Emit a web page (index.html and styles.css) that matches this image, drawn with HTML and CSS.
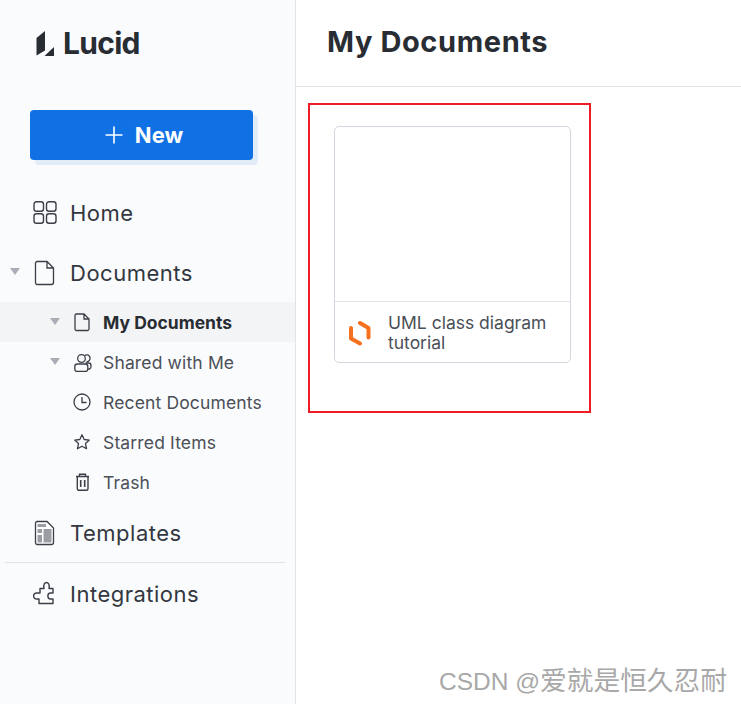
FILE: index.html
```html
<!DOCTYPE html>
<html lang="en">
<head>
<meta charset="utf-8">
<title>My Documents</title>
<link rel="stylesheet" href="styles.css">
</head>
<body>
<div class="app">
  <aside class="sidebar">
    <div class="logo">
      <svg class="logo-mark" width="18" height="25" viewBox="0 0 18 25"><path d="M0.500 7 9 0V19.500L0.500 24.500ZM8.500 25 18 16V25Z" fill="#282c33"/></svg>
      <span class="logo-text">Lucid</span>
    </div>
    <div class="new-wrap">
      <button class="new-btn">
        <svg width="18" height="18" viewBox="0 0 18 18"><path d="M9 0.500V17.500M0.500 9H17.500" stroke="#fff" stroke-width="1.600" fill="none"/></svg>
        <span>New</span>
      </button>
    </div>
    <nav>
      <div class="item top">
        <span class="caret-slot"></span>
        <svg class="top-icon" width="26" height="26" viewBox="0 0 26 26"><g fill="none" stroke="#3a3f47" stroke-width="1.400"><rect x="3" y="1.700" width="9.500" height="9.500" rx="2.500"/><rect x="15.500" y="1.700" width="9.500" height="9.500" rx="2.500"/><rect x="3" y="13.700" width="9.500" height="9.500" rx="2.500"/><rect x="15.500" y="13.700" width="9.500" height="9.500" rx="2.500"/></g></svg>
        <span>Home</span>
      </div>
      <div class="item top docs">
        <span class="caret-slot"><span class="caret"></span></span>
        <svg class="top-icon" width="26" height="26" viewBox="0 0 26 26"><path d="M6 1.500H16L22.500 8V22.500A2 2 0 0 1 20.500 24.500H6A2 2 0 0 1 4.500 22.500V3A2 2 0 0 1 6 1.500ZM16 1.500V8H22.500" fill="none" stroke="#3a3f47" stroke-width="1.300"/></svg>
        <span>Documents</span>
      </div>
      <div class="item sub active">
        <span class="caret-slot"><span class="caret"></span></span>
        <svg class="sub-icon" width="20" height="20" viewBox="0 0 20 20"><path d="M4.500 2H12L17 7V17A1.500 1.500 0 0 1 15.500 18.500H4.500A1.500 1.500 0 0 1 3 17V3.500A1.500 1.500 0 0 1 4.500 2ZM12 2V7H17" fill="none" stroke="#3a3f47" stroke-width="1.300"/></svg>
        <span>My Documents</span>
      </div>
      <div class="item sub">
        <span class="caret-slot"><span class="caret"></span></span>
        <svg class="sub-icon" width="20" height="20" viewBox="0 0 20 20"><g fill="none" stroke="#3a3f47" stroke-width="1.300"><circle cx="9.500" cy="6.500" r="3.800"/><path d="M12.500 3.500A3.500 3.500 0 1 1 14.500 9.800"/><rect x="2.800" y="12" width="13" height="7.500" rx="2.500"/><path d="M13.500 11H16.500A2.500 2.500 0 0 1 19 13.500V15A2.500 2.500 0 0 1 16 17"/></g></svg>
        <span>Shared with Me</span>
      </div>
      <div class="item sub">
        <span class="caret-slot"></span>
        <svg class="sub-icon" width="20" height="20" viewBox="0 0 20 20"><g fill="none" stroke="#3a3f47" stroke-width="1.300"><circle cx="10" cy="10" r="8"/><path d="M10 5V10.500H14.500"/></g></svg>
        <span>Recent Documents</span>
      </div>
      <div class="item sub">
        <span class="caret-slot"></span>
        <svg class="sub-icon" width="20" height="20" viewBox="0 0 20 20"><path d="M10 2.800 12.200 7.500 17.300 8.100 13.500 11.600 14.500 16.700 10 14.200 5.500 16.700 6.500 11.600 2.700 8.100 7.800 7.500Z" fill="none" stroke="#3a3f47" stroke-width="1.300" stroke-linejoin="round"/></svg>
        <span>Starred Items</span>
      </div>
      <div class="item sub">
        <span class="caret-slot"></span>
        <svg class="sub-icon" width="20" height="20" viewBox="0 0 20 20"><g fill="none" stroke="#3a3f47" stroke-width="1.400"><path d="M4 4.500H17M7.500 4.500V2.200H13.500V4.500M5.300 4.500V16.800A1.500 1.500 0 0 0 6.800 18.300H14.500A1.500 1.500 0 0 0 16 16.800V4.500"/><path d="M8.700 8V15M12.700 8V15" stroke-width="1.600"/></g></svg>
        <span>Trash</span>
      </div>
      <div class="item top templates">
        <span class="caret-slot"></span>
        <svg class="top-icon" width="26" height="26" viewBox="0 0 26 26"><path d="M6 1.500H16L22.500 8V22.500A2 2 0 0 1 20.500 24.500H6A2 2 0 0 1 4.500 22.500V3A2 2 0 0 1 6 1.500Z" fill="#fff" stroke="#3a3f47" stroke-width="1.300"/><path d="M6.500 4H15V7H6.500ZM6.500 9H11V13H6.500ZM6.500 15H11V22.500H6.500ZM12.500 9H20.500V22.500H12.500Z" fill="#9a9da3"/></svg>
        <span>Templates</span>
      </div>
      <hr class="divider">
      <div class="item top integrations">
        <span class="caret-slot"></span>
        <svg class="top-icon" width="26" height="26" viewBox="0 0 26 26"><path d="M9 7.500H13C12 3 14 1.500 15.500 1.500C17 1.500 19 3 18 7.500H22V12H19.500C16 12 16 18 19.500 18H22V22.500H8V18H6C1.500 18 1.500 12 6 12H9Z" fill="none" stroke="#3a3f47" stroke-width="1.400" stroke-linejoin="round"/></svg>
        <span>Integrations</span>
      </div>
    </nav>
  </aside>
  <main class="main">
    <header class="header"><h1>My Documents</h1></header>
    <section class="content">
      <div class="highlight">
        <article class="card">
          <div class="thumb"></div>
          <div class="card-foot">
            <svg width="24" height="26" viewBox="0 0 24 26"><path d="M12 3 20.500 8V17.500M3 8V18.500L12 23.500" fill="none" stroke="#f7701d" stroke-width="4" stroke-linejoin="round" stroke-linecap="round"/></svg>
            <span class="card-title">UML class diagram tutorial</span>
          </div>
        </article>
      </div>
    </section>
  </main>
</div>
<div class="watermark">CSDN @<span class="watermark-cjk">爱就是恒久忍耐</span></div>
</body>
</html>
```
FILE: styles.css
```css
* { box-sizing: border-box; }
html, body { margin: 0; height: 100%; overflow: hidden; }
body { font-family: "Inter", "Liberation Sans", sans-serif; color: #282c33; background: #fff; }
.app { display: flex; height: 704px; }
.sidebar { width: 296px; flex: none; background: #fafbfd; border-right: 1px solid #e1e3e8; }
.logo { display: flex; align-items: center; gap: 9px; height: 86px; padding: 0 0 0 36px; }
.logo-mark { flex: none; }
.logo-text { font-size: 30px; font-weight: 700; letter-spacing: -0.7px; color: #282c33; line-height: 1; }
.new-wrap { padding: 24px 0 0 30px; }
.new-btn { width: 223px; height: 50px; display: flex; align-items: center; justify-content: center; gap: 12px; padding: 0 0 0 5px; border: 0; border-radius: 4px; background: #1071e5; color: #fff; font: 700 22px "Inter", sans-serif; box-shadow: 5px 5px 0 #e3ecf9; }
.new-btn svg { flex: none; }
.item { display: flex; align-items: center; }
.top { height: 60px; font-size: 22px; letter-spacing: 0.5px; color: #33373f; padding-left: 9px; }
.top .caret-slot { width: 22px; }
.top .caret { margin: 0 0 3px 1px; }
.top-icon { margin-right: 13px; flex: none; }
.docs { height: 59px; }
.sub { height: 40px; font-size: 17.500px; letter-spacing: 0.15px; color: #4b4f57; padding-left: 50px; }
.sub .caret-slot { width: 22px; }
.sub .caret { margin-bottom: 2px; }
.sub-icon { margin-right: 11px; flex: none; }
.caret-slot { display: flex; flex: none; }
.caret { width: 0; height: 0; border-left: 5.500px solid transparent; border-right: 5.500px solid transparent; border-top: 7px solid #a9adb5; }
.active { background: #f3f4f6; font-weight: 700; letter-spacing: 0; color: #282c33; }
nav { margin-top: 23px; }
.templates { padding-top: 2px; }
.integrations { height: 62px; }
.divider { margin: 0 10px 0 5px; border: 0; border-top: 1px solid #e1e3e8; }
.main { flex: 1; min-width: 0; }
.header { height: 87px; padding: 23px 0 0 31px; border-bottom: 1px solid #e1e3e8; }
.header h1 { margin: 0; font-size: 29px; font-weight: 700; letter-spacing: 0.6px; line-height: 38px; color: #282c33; }
.content { padding: 16px 0 0 12px; }
.highlight { width: 283px; height: 310px; padding: 21px 0 0 24px; border: 2px solid #ee1c25; }
.card { width: 237px; height: 237px; border: 1px solid #d3d8e0; border-radius: 5px; display: flex; flex-direction: column; background: #fff; }
.thumb { height: 175px; border-bottom: 1px solid #e1e3e8; flex: none; }
.card-foot { display: flex; align-items: center; gap: 16px; padding: 2px 8px 0 13px; flex: 1; }
.card-foot svg { flex: none; }
.card-title { font-size: 17.500px; line-height: 20px; color: #4b4f57; }
.watermark { position: absolute; left: 439px; top: 659px; font: 24.500px "Liberation Sans", "Noto Sans CJK SC", sans-serif; color: #a8a8a8; white-space: nowrap; }
.watermark-cjk { font-size: 26.700px; }
```
